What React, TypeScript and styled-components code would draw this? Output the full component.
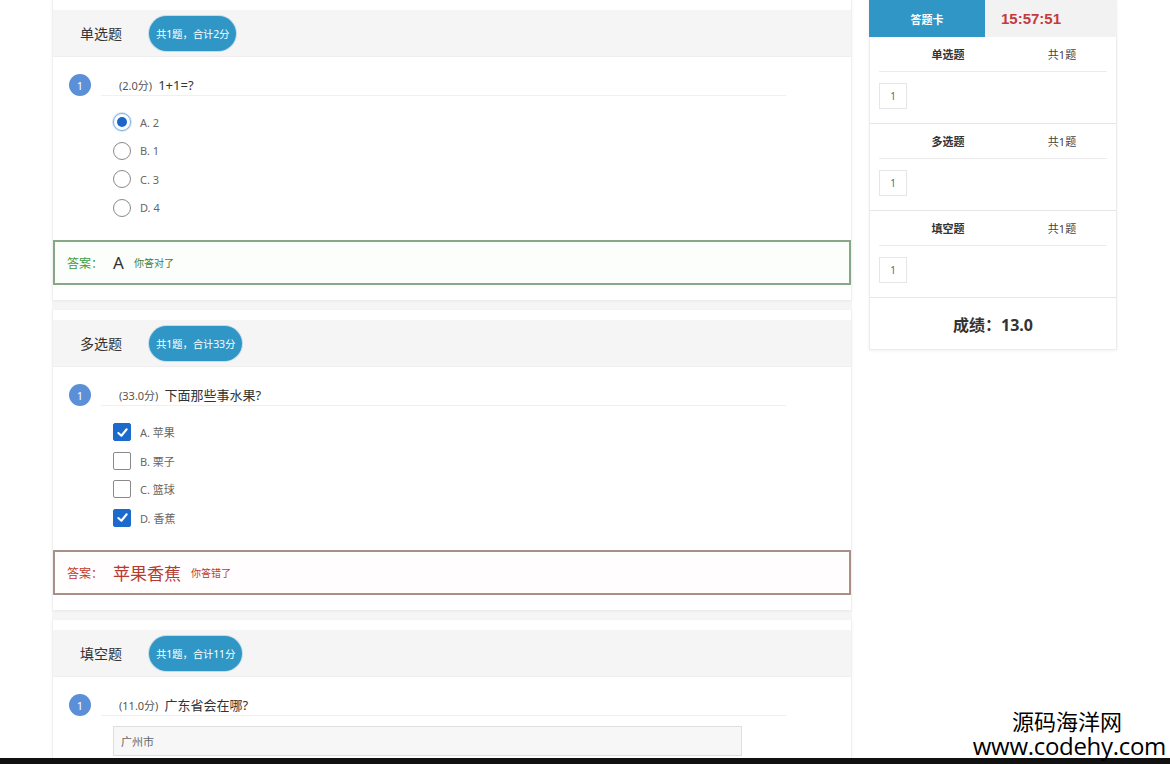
import React from "react";
import styled, { createGlobalStyle, css } from "styled-components";

const GlobalStyle = createGlobalStyle`
  html, body { margin: 0; padding: 0; background: #ffffff; }
  body { font-family: "Noto Sans", "Noto Sans CJK SC", sans-serif; color: #333; }
  * { box-sizing: border-box; }
`;

const Page = styled.div`
  position: relative;
  width: 1170px;
  height: 764px;
  display: flex;
  flex-direction: column;
  overflow: hidden;
  background: #fff;
`;

const Content = styled.div`
  flex: 1;
  min-height: 0;
  display: flex;
  align-items: flex-start;
  gap: 17px;
  padding-left: 52px;
  overflow: hidden;
`;

const Main = styled.div`
  width: 800px;
  display: flex;
  flex-direction: column;
  gap: 10px;
  background: #f5f5f5;
`;

const Card = styled.section`
  background: #fff;
  padding: 10px 0 15px;
  border-left: 1px solid #f0f0f0;
  border-right: 1px solid #f0f0f0;
  box-shadow: 0 1px 3px rgba(0, 0, 0, 0.06);
`;

const Header = styled.div`
  height: 47px;
  background: #f5f5f5;
  display: flex;
  align-items: center;
  gap: 27px;
  padding-left: 27px;
  border-bottom: 1px solid #efefef;
`;

const HeaderTitle = styled.span`
  font-size: 14px;
  color: #333;
`;

const Badge = styled.span`
  height: 35px;
  border-radius: 18px;
  background: #2f96c6;
  color: #fff;
  font-size: 10.5px;
  letter-spacing: -0.2px;
  display: inline-flex;
  align-items: center;
  padding: 0 7px;
  box-shadow: 0 0 0 1px rgba(47, 150, 198, 0.25);
`;

const QuestionRow = styled.div`
  display: flex;
  align-items: center;
  margin-top: 17px;
  padding-left: 16px;
  height: 22px;
`;

const NumCircle = styled.span`
  width: 22px;
  height: 22px;
  border-radius: 50%;
  background: #5b8fd8;
  color: #fff;
  font-size: 11px;
  display: inline-flex;
  align-items: center;
  justify-content: center;
  flex: none;
`;

const QuestionText = styled.div`
  margin-left: 10px;
  padding-left: 18px;
  width: 685px;
  height: 22px;
  display: flex;
  align-items: center;
  gap: 6px;
  border-bottom: 1px solid #f0f0f0;
`;

const Score = styled.span`
  font-size: 11px;
  color: #555;
`;

const Stem = styled.span`
  font-size: 13px;
  color: #333;
`;

const Options = styled.div`
  padding-top: 12px;
  padding-left: 60px;
  display: flex;
  flex-direction: column;
`;

const OptionRow = styled.div`
  height: 28.5px;
  display: flex;
  align-items: center;
  gap: 9px;
`;

const OptionLabel = styled.span`
  font-size: 11px;
  color: #666;
`;

const Radio = styled.span<{ $checked?: boolean }>`
  width: 18px;
  height: 18px;
  border-radius: 50%;
  border: 1.5px solid #8a8a8a;
  background: #fff;
  display: inline-flex;
  align-items: center;
  justify-content: center;
  flex: none;
  ${(p) =>
    p.$checked &&
    css`
      border-color: #7fb3e6;
      box-shadow: 0 0 0 1px #cfe3f7;
      &::after {
        content: "";
        width: 10px;
        height: 10px;
        border-radius: 50%;
        background: #1a66c9;
      }
    `}
`;

const Check = styled.span<{ $checked?: boolean }>`
  width: 18px;
  height: 18px;
  border-radius: 2px;
  border: 1.5px solid #8a8a8a;
  background: #fff;
  display: inline-flex;
  align-items: center;
  justify-content: center;
  flex: none;
  ${(p) =>
    p.$checked &&
    css`
      border-color: #1c6bcc;
      background: #1c6bcc;
    `}
`;

const AnswerBox = styled.div<{ $ok: boolean }>`
  margin-top: 18px;
  height: 45px;
  border: 2px solid ${(p) => (p.$ok ? "#86a886" : "#a88f88")};
  background: ${(p) => (p.$ok ? "#fcfefc" : "#fffdfd")};
  display: flex;
  align-items: center;
  gap: 10px;
  padding-left: 12px;
`;

const AnswerLabel = styled.span<{ $ok: boolean }>`
  font-size: 12px;
  color: ${(p) => (p.$ok ? "#3c9a40" : "#c0392b")};
`;

const AnswerValue = styled.span<{ $ok: boolean }>`
  font-size: 17px;
  color: ${(p) => (p.$ok ? "#333" : "#b53a30")};
`;

const AnswerNote = styled.span<{ $ok: boolean }>`
  font-size: 10px;
  color: ${(p) => (p.$ok ? "#3a7d3c" : "#c0392b")};
`;

const FillInput = styled.div`
  margin: 10px 0 0 60px;
  width: 629px;
  height: 30px;
  background: #f7f7f7;
  border: 1px solid #dedede;
  display: flex;
  align-items: center;
  padding-left: 7px;
  font-size: 11px;
  color: #666;
`;

/* ---------- side panel ---------- */

const Side = styled.aside`
  width: 248px;
  display: flex;
  flex-direction: column;
  box-shadow: 0 1px 3px rgba(0, 0, 0, 0.06);
`;

const Tabs = styled.div`
  height: 37px;
  display: grid;
  grid-template-columns: 116px 1fr;
`;

const CardTab = styled.div`
  background: #2f96c6;
  color: #fff;
  font-size: 11px;
  font-weight: 700;
  display: flex;
  align-items: center;
  justify-content: center;
`;

const Timer = styled.div`
  background: #f2f2f2;
  color: #c53b3b;
  font-family: "Liberation Sans", "Noto Sans", sans-serif;
  font-size: 15px;
  font-weight: 700;
  display: flex;
  align-items: center;
  padding-left: 16px;
`;

const SideBody = styled.div`
  border: 1px solid #ececec;
  border-top: none;
`;

const SideGroup = styled.div`
  border-bottom: 1px solid #e6e6e6;
`;

const GroupTitle = styled.div`
  margin: 0 9px;
  height: 35px;
  display: grid;
  grid-template-columns: 138px 1fr;
  align-items: center;
  text-align: center;
  border-bottom: 1px solid #ececec;
`;

const GroupName = styled.span`
  font-size: 11px;
  font-weight: 700;
  color: #333;
`;

const GroupCount = styled.span`
  font-size: 11px;
  color: #444;
`;

const GroupItems = styled.div`
  padding: 11px 9px 14px;
  display: flex;
  gap: 6px;
`;

const ItemBox = styled.span`
  width: 28px;
  height: 26px;
  border: 1px solid #e6e6e6;
  display: inline-flex;
  align-items: center;
  justify-content: center;
  font-size: 10px;
  color: #666;
`;

const ScoreRow = styled.div`
  height: 51px;
  display: flex;
  align-items: center;
  justify-content: center;
  font-size: 16px;
  font-weight: 700;
  color: #333;
`;

const BottomBar = styled.div`
  height: 6px;
  background: #111;
  flex: none;
`;

const Watermark = styled.div`
  position: absolute;
  right: 4px;
  bottom: 6px;
  display: flex;
  flex-direction: column;
  align-items: flex-end;
  gap: 2px;
  color: #000;
`;

const WmCn = styled.span`
  font-family: "Noto Sans CJK SC", sans-serif;
  font-size: 22px;
  line-height: 24px;
  margin-right: 44px;
`;

const WmUrl = styled.span`
  font-family: "Open Sans", "Noto Sans", sans-serif;
  font-size: 24px;
  line-height: 24px;
  letter-spacing: -0.3px;
`;

const CheckMark = () => (
  <svg width="13" height="13" viewBox="0 0 14 14">
    <path d="M2.5 7.5 L5.8 10.5 L11.5 3.5" fill="none" stroke="#fff" strokeWidth="2.2" strokeLinecap="round" strokeLinejoin="round" />
  </svg>
);

type Opt = { label: string; checked?: boolean };

const singleOpts: Opt[] = [
  { label: "A. 2", checked: true },
  { label: "B. 1" },
  { label: "C. 3" },
  { label: "D. 4" },
];

const multiOpts: Opt[] = [
  { label: "A. 苹果", checked: true },
  { label: "B. 栗子" },
  { label: "C. 篮球" },
  { label: "D. 香蕉", checked: true },
];

const sideGroups = ["单选题", "多选题", "填空题"];

export default function App() {
  return (
    <Page>
      <GlobalStyle />
      <Content>
        <Main>
          <Card>
            <Header>
              <HeaderTitle>单选题</HeaderTitle>
              <Badge>共1题，合计2分</Badge>
            </Header>
            <QuestionRow>
              <NumCircle>1</NumCircle>
              <QuestionText>
                <Score>(2.0分)</Score>
                <Stem>1+1=?</Stem>
              </QuestionText>
            </QuestionRow>
            <Options>
              {singleOpts.map((o) => (
                <OptionRow key={o.label}>
                  <Radio $checked={o.checked} />
                  <OptionLabel>{o.label}</OptionLabel>
                </OptionRow>
              ))}
            </Options>
            <AnswerBox $ok>
              <AnswerLabel $ok>答案：</AnswerLabel>
              <AnswerValue $ok>A</AnswerValue>
              <AnswerNote $ok>你答对了</AnswerNote>
            </AnswerBox>
          </Card>

          <Card>
            <Header>
              <HeaderTitle>多选题</HeaderTitle>
              <Badge>共1题，合计33分</Badge>
            </Header>
            <QuestionRow>
              <NumCircle>1</NumCircle>
              <QuestionText>
                <Score>(33.0分)</Score>
                <Stem>下面那些事水果?</Stem>
              </QuestionText>
            </QuestionRow>
            <Options>
              {multiOpts.map((o) => (
                <OptionRow key={o.label}>
                  <Check $checked={o.checked}>{o.checked && <CheckMark />}</Check>
                  <OptionLabel>{o.label}</OptionLabel>
                </OptionRow>
              ))}
            </Options>
            <AnswerBox $ok={false}>
              <AnswerLabel $ok={false}>答案：</AnswerLabel>
              <AnswerValue $ok={false}>苹果香蕉</AnswerValue>
              <AnswerNote $ok={false}>你答错了</AnswerNote>
            </AnswerBox>
          </Card>

          <Card>
            <Header>
              <HeaderTitle>填空题</HeaderTitle>
              <Badge>共1题，合计11分</Badge>
            </Header>
            <QuestionRow>
              <NumCircle>1</NumCircle>
              <QuestionText>
                <Score>(11.0分)</Score>
                <Stem>广东省会在哪?</Stem>
              </QuestionText>
            </QuestionRow>
            <FillInput>广州市</FillInput>
          </Card>
        </Main>

        <Side>
          <Tabs>
            <CardTab>答题卡</CardTab>
            <Timer>15:57:51</Timer>
          </Tabs>
          <SideBody>
            {sideGroups.map((g) => (
              <SideGroup key={g}>
                <GroupTitle>
                  <GroupName>{g}</GroupName>
                  <GroupCount>共1题</GroupCount>
                </GroupTitle>
                <GroupItems>
                  <ItemBox>1</ItemBox>
                </GroupItems>
              </SideGroup>
            ))}
            <ScoreRow>成绩：13.0</ScoreRow>
          </SideBody>
        </Side>
      </Content>
      <BottomBar />
      <Watermark>
        <WmCn>源码海洋网</WmCn>
        <WmUrl>www.codehy.com</WmUrl>
      </Watermark>
    </Page>
  );
}
